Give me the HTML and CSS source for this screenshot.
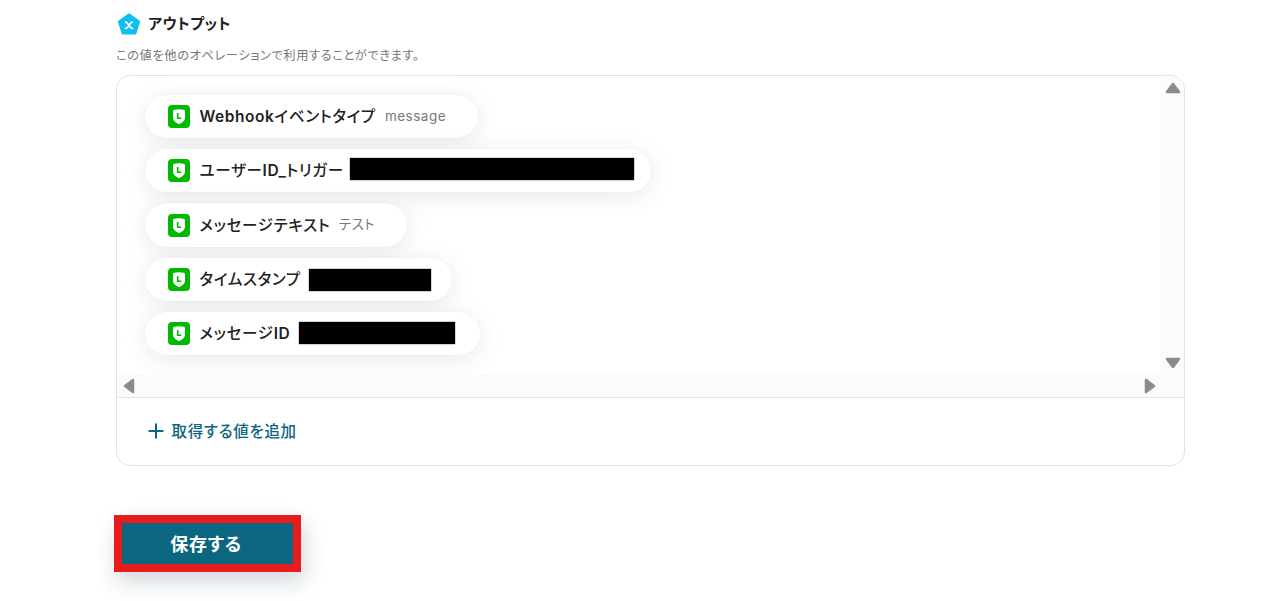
FILE: index.html
```html
<!DOCTYPE html>
<html lang="ja">
<head>
  <meta charset="UTF-8"/>
  <meta name="viewport" content="width=device-width, initial-scale=1.0"/>
  <title>アウトプット</title>
  <link rel="stylesheet" href="styles.css">
</head>
<body>

  <svg class="defs" width="0" height="0">
    <symbol id="line-icon" viewBox="0 0 22 23">
      <rect width="22" height="23" rx="4" fill="#00b900"/>
      <path d="M5 6.200Q5 5 6.200 4.800Q11 3.500 15.800 4.800Q17 5 17 6.200V12.500Q17 16.500 11.800 18.800Q11 19.200 10.200 18.800Q5 16.500 5 12.500Z" fill="#fff"/>
      <path d="M9.700 8V13.300H13.300" fill="none" stroke="#00b900" stroke-width="1.600"/>
    </symbol>
  </svg>

  <main class="output">
    <div class="title">
      <svg class="title-icon" viewBox="0 0 24 22">
        <path d="M12 2L21.500 8.800L18 20H6L2.500 8.800Z" fill="#12bdf0" stroke="#12bdf0" stroke-width="3" stroke-linejoin="round"/>
        <path d="M7.800 9.200H9.600L14.400 15.300H16.200M16 9.200H14.400L9.600 15.300H7.800" fill="none" stroke="#fff" stroke-width="1.600"/>
      </svg>
      <h2>アウトプット</h2>
    </div>
    <p class="note">この値を他のオペレーションで利用することができます。</p>

    <section class="panel">
      <div class="scroll-area">
        <div class="list">
          <div class="pill pill-event">
            <svg class="pill-icon"><use href="#line-icon"/></svg>
            <span class="label"><b>Webhook</b>イベントタイプ</span>
            <span class="value">message</span>
          </div>
          <div class="pill pill-user">
            <svg class="pill-icon"><use href="#line-icon"/></svg>
            <span class="label">ユーザー<b>ID_</b>トリガー</span>
            <span class="mask"></span>
          </div>
          <div class="pill pill-text">
            <svg class="pill-icon"><use href="#line-icon"/></svg>
            <span class="label">メッセージテキスト</span>
            <span class="value">テスト</span>
          </div>
          <div class="pill pill-time">
            <svg class="pill-icon"><use href="#line-icon"/></svg>
            <span class="label">タイムスタンプ</span>
            <span class="mask"></span>
          </div>
          <div class="pill pill-id">
            <svg class="pill-icon"><use href="#line-icon"/></svg>
            <span class="label">メッセージ<b>ID</b></span>
            <span class="mask"></span>
          </div>
        </div>
        <div class="bar-v">
          <svg class="arrow" viewBox="0 0 16 12"><path d="M8 2L14 10H2Z"/></svg>
          <svg class="arrow" viewBox="0 0 16 12"><path d="M2 2H14L8 10Z"/></svg>
        </div>
        <div class="bar-h">
          <svg class="arrow-side" viewBox="0 0 12 16"><path d="M2 8L10 2V14Z"/></svg>
          <svg class="arrow-side" viewBox="0 0 12 16"><path d="M2 2L10 8L2 14Z"/></svg>
        </div>
        <div class="corner"></div>
      </div>
      <div class="add">
        <svg class="plus" viewBox="0 0 16 16"><path d="M8 .5V15.500M.5 8H15.500"/></svg>
        <span>取得する値を追加</span>
      </div>
    </section>

    <button type="button" class="save">保存する</button>
  </main>

</body>
</html>
```
FILE: styles.css
```css
* {
  box-sizing: border-box;
}
body {
  margin: 0;
  height: 601px;
  overflow: hidden;
  background: #fff;
  color: #222;
  font-family: Inter, "Noto Sans CJK JP", sans-serif;
  font-feature-settings: "palt";
}
.defs {
  display: block;
}
.output {
  width: 1069px;
  margin-left: 116px;
  padding-top: 12px;
}
.title {
  display: flex;
  align-items: center;
  height: 24px;
}
.title-icon {
  width: 24px;
  height: 22px;
  margin-left: 1px;
}
h2 {
  margin: 0 0 0 7px;
  font-size: 15px;
  font-weight: 600;
  line-height: 24px;
  letter-spacing: 0.5px;
}
.note {
  margin: 10px 0 9px;
  color: #777;
  font-size: 12.3px;
  line-height: 20px;
  letter-spacing: 0.55px;
}
.panel {
  height: 391px;
  border: 1px solid #e2e2e2;
  border-radius: 14px;
  overflow: hidden;
}
.scroll-area {
  display: grid;
  grid-template-columns: 1fr 23px;
  grid-template-rows: 298px 23px;
  height: 322px;
  border-bottom: 1px solid #e2e2e2;
}
.list {
  display: flex;
  flex-direction: column;
  align-items: flex-start;
  gap: 10.8px;
  padding: 18.7px 0 0 28px;
  overflow: hidden;
}
.pill {
  position: relative;
  display: flex;
  align-items: center;
  flex: none;
  height: 43.5px;
  padding-left: 23px;
  border-radius: 22px;
  background: #fff;
  box-shadow: 0 4px 26px rgba(0, 0, 0, 0.09), 0 0 2px rgba(0, 0, 0, 0.05);
  white-space: nowrap;
}
.pill-event {
  width: 333px;
}
.pill-user {
  width: 505.5px;
}
.pill-text {
  width: 262px;
}
.pill-time {
  width: 307px;
}
.pill-id {
  width: 335px;
}
.pill-icon {
  width: 22px;
  height: 23px;
}
.label {
  margin-left: 9.5px;
  padding-bottom: 2px;
  font-size: 15.5px;
  font-weight: 500;
  letter-spacing: 0.7px;
}
.label b {
  font-weight: 600;
  letter-spacing: 0.55px;
}
.pill-user .label,
.pill-id .label {
  padding-bottom: 3px;
}
.value {
  margin-left: 9px;
  padding-bottom: 1px;
  color: #777;
  font-size: 13.5px;
  letter-spacing: 0.5px;
}
.pill-text .value {
  margin-left: 8.5px;
  padding-bottom: 4px;
}
/* hides the private part of a value */
.mask {
  position: absolute;
  top: 9px;
  height: 22px;
  background: #000;
  box-shadow: 0 0 1px #000;
}
.pill-user .mask {
  left: 205px;
  width: 284px;
}
.pill-time .mask {
  left: 164px;
  top: 11px;
  width: 122px;
}
.pill-id .mask {
  left: 154px;
  top: 10px;
  width: 156px;
}
.bar-v,
.bar-h {
  display: flex;
  justify-content: space-between;
  align-items: center;
  background: #fbfbfb;
}
.bar-v {
  flex-direction: column;
  padding: 6px 0 5px;
}
.bar-h {
  padding: 0 5.5px;
}
.corner {
  background: #fbfbfb;
}
.arrow {
  width: 16px;
  height: 12px;
}
.arrow-side {
  width: 12px;
  height: 16px;
}
.arrow path,
.arrow-side path {
  fill: #8b8b8b;
  stroke: #8b8b8b;
  stroke-width: 2.5;
  stroke-linejoin: round;
}
.add {
  display: flex;
  align-items: center;
  gap: 7.5px;
  height: 67px;
  padding: 0 0 2px 31px;
  color: #0b6580;
  font-size: 15.5px;
  font-weight: 500;
  letter-spacing: 0.7px;
}
.add span {
  padding-bottom: 1px;
}
.plus {
  width: 16px;
  height: 16px;
  fill: none;
  stroke: #0b6580;
  stroke-width: 2;
}
.save {
  display: block;
  width: 187px;
  height: 57px;
  margin: 49px 0 0 -2.5px;
  padding: 0 2px 2px 0;
  border: 8px solid #e71c1d;
  background: #0b6780;
  color: #fff;
  font: inherit;
  font-size: 18px;
  font-weight: 700;
  letter-spacing: 0.7px;
  box-shadow: 3px 9px 22px rgba(20, 50, 65, 0.2);
}
```
